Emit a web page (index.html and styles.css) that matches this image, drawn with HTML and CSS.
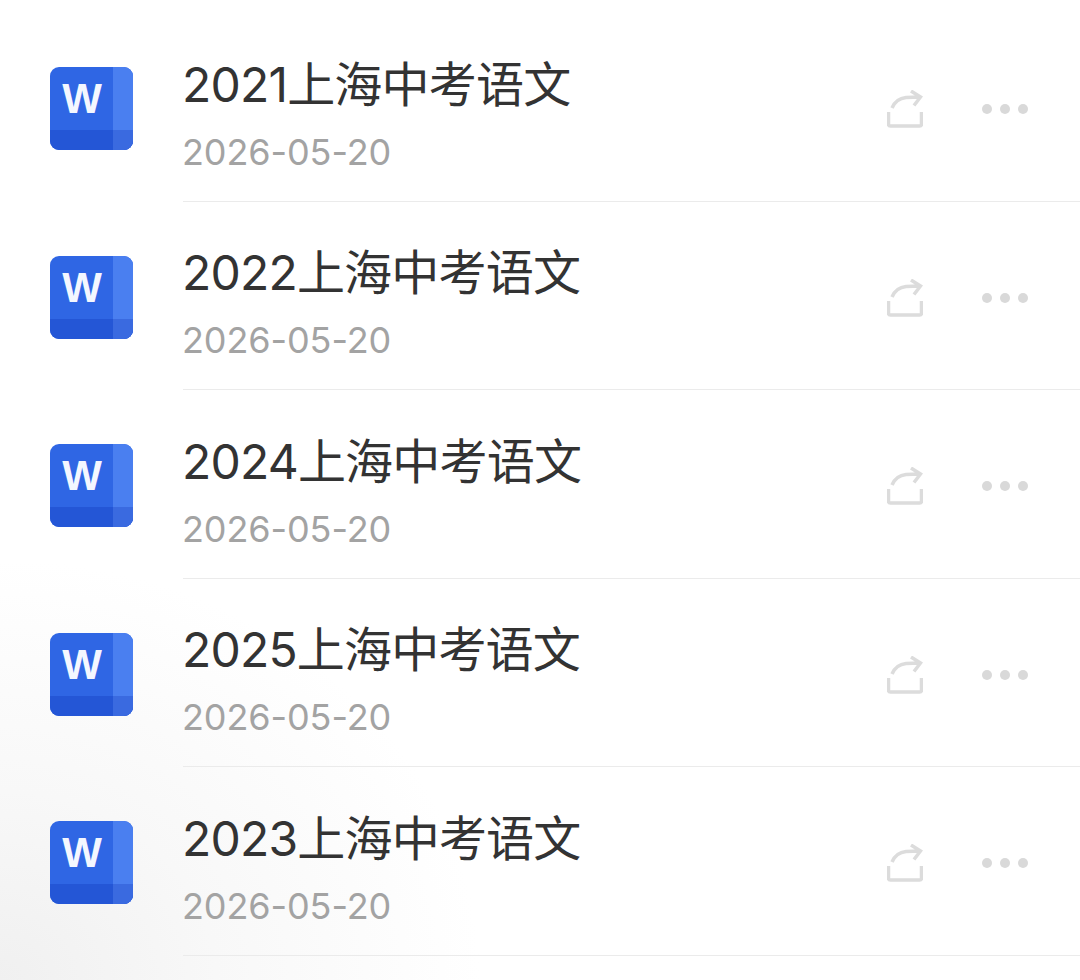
FILE: index.html
```html
<!DOCTYPE html>
<html lang="zh-CN">
<head>
    <meta charset="UTF-8">
    <title>文件列表</title>
    <link rel="stylesheet" href="styles.css">
</head>
<body>

<svg class="defs" width="0" height="0">
    <symbol id="word" viewBox="0 0 83 83">
        <rect width="83" height="83" rx="9" fill="#2f66e4"/>
        <path d="M63 0h11a9 9 0 0 1 9 9v65a9 9 0 0 1-9 9H63z" fill="#4a7ff0"/>
        <path d="M0 63h83v11a9 9 0 0 1-9 9H9a9 9 0 0 1-9-9z" fill="#2456d6"/>
        <path d="M63 63h20v11a9 9 0 0 1-9 9H63z" fill="#3a6ae0"/>
    </symbol>
    <symbol id="share" viewBox="0 0 36 38">
        <path d="M1.500 22v12a2 2 0 0 0 2 2h29a2 2 0 0 0 2-2V22" fill="none" stroke="#dcdcdc" stroke-width="3.500"/>
        <path d="M5 18c3-7 9-10 14-10.500l14-.5M24 1l9.500 6L27 15.500" fill="none" stroke="#dcdcdc" stroke-width="3.500"/>
    </symbol>
</svg>

<div class="list">

    <div class="row">
        <svg class="file-icon" viewBox="0 0 83 83"><use href="#word"/><text x="32" y="46" class="word-letter" text-anchor="middle">W</text></svg>
        <div class="info">
            <div class="title">2021上海中考语文</div>
            <div class="date">2026-05-20</div>
        </div>
        <svg class="share"><use href="#share"/></svg>
        <div class="more"><i></i><i></i><i></i></div>
    </div>

    <div class="row">
        <svg class="file-icon" viewBox="0 0 83 83"><use href="#word"/><text x="32" y="46" class="word-letter" text-anchor="middle">W</text></svg>
        <div class="info">
            <div class="title">2022上海中考语文</div>
            <div class="date">2026-05-20</div>
        </div>
        <svg class="share"><use href="#share"/></svg>
        <div class="more"><i></i><i></i><i></i></div>
    </div>

    <div class="row">
        <svg class="file-icon" viewBox="0 0 83 83"><use href="#word"/><text x="32" y="46" class="word-letter" text-anchor="middle">W</text></svg>
        <div class="info">
            <div class="title">2024上海中考语文</div>
            <div class="date">2026-05-20</div>
        </div>
        <svg class="share"><use href="#share"/></svg>
        <div class="more"><i></i><i></i><i></i></div>
    </div>

    <div class="row">
        <svg class="file-icon" viewBox="0 0 83 83"><use href="#word"/><text x="32" y="46" class="word-letter" text-anchor="middle">W</text></svg>
        <div class="info">
            <div class="title">2025上海中考语文</div>
            <div class="date">2026-05-20</div>
        </div>
        <svg class="share"><use href="#share"/></svg>
        <div class="more"><i></i><i></i><i></i></div>
    </div>

    <div class="row">
        <svg class="file-icon" viewBox="0 0 83 83"><use href="#word"/><text x="32" y="46" class="word-letter" text-anchor="middle">W</text></svg>
        <div class="info">
            <div class="title">2023上海中考语文</div>
            <div class="date">2026-05-20</div>
        </div>
        <svg class="share"><use href="#share"/></svg>
        <div class="more"><i></i><i></i><i></i></div>
    </div>

</div>

</body>
</html>
```

FILE: styles.css
```css
html, body {
    height: 100%;
}

body {
    margin: 0;
    overflow: hidden;
    font-family: 'Inter', 'Noto Sans CJK SC', sans-serif;
    background: radial-gradient(ellipse 480px 420px at 0 980px, #f0f0f0 0%, #f8f8f8 45%, #fff 100%);
}

.defs {
    display: block;
}

.word-letter {
    font-family: 'Liberation Sans', sans-serif;
    font-weight: bold;
    font-size: 42px;
    fill: #f4f7ff;
}

.list {
    padding-top: 13px;
}

.row {
    height: 188.5px;
    box-sizing: border-box;
    display: flex;
    align-items: center;
    padding-left: 50px;
    position: relative;
}

.row::after {
    content: "";
    position: absolute;
    left: 183px;
    right: 0;
    bottom: 0;
    height: 1px;
    background: #ebebeb;
}

.file-icon {
    width: 83px;
    height: 83px;
    flex-shrink: 0;
    margin-right: 49px;
    margin-top: 3px;
}

.info {
    flex: 1;
    margin-top: 16px;
}

.title {
    font-size: 48px;
    line-height: 56px;
    letter-spacing: -0.8px;
    color: #333;
}

.date {
    font-size: 36px;
    line-height: 44px;
    margin-top: 17px;
    letter-spacing: -0.1px;
    color: #a3a3a3;
}

.share {
    width: 36px;
    height: 38px;
    margin-right: 59px;
    margin-top: 4px;
}

.more {
    display: flex;
    gap: 8px;
    margin-right: 52px;
    margin-top: 4px;
}

.more i {
    width: 10px;
    height: 10px;
    border-radius: 50%;
    background: #d9d9d9;
}
```
